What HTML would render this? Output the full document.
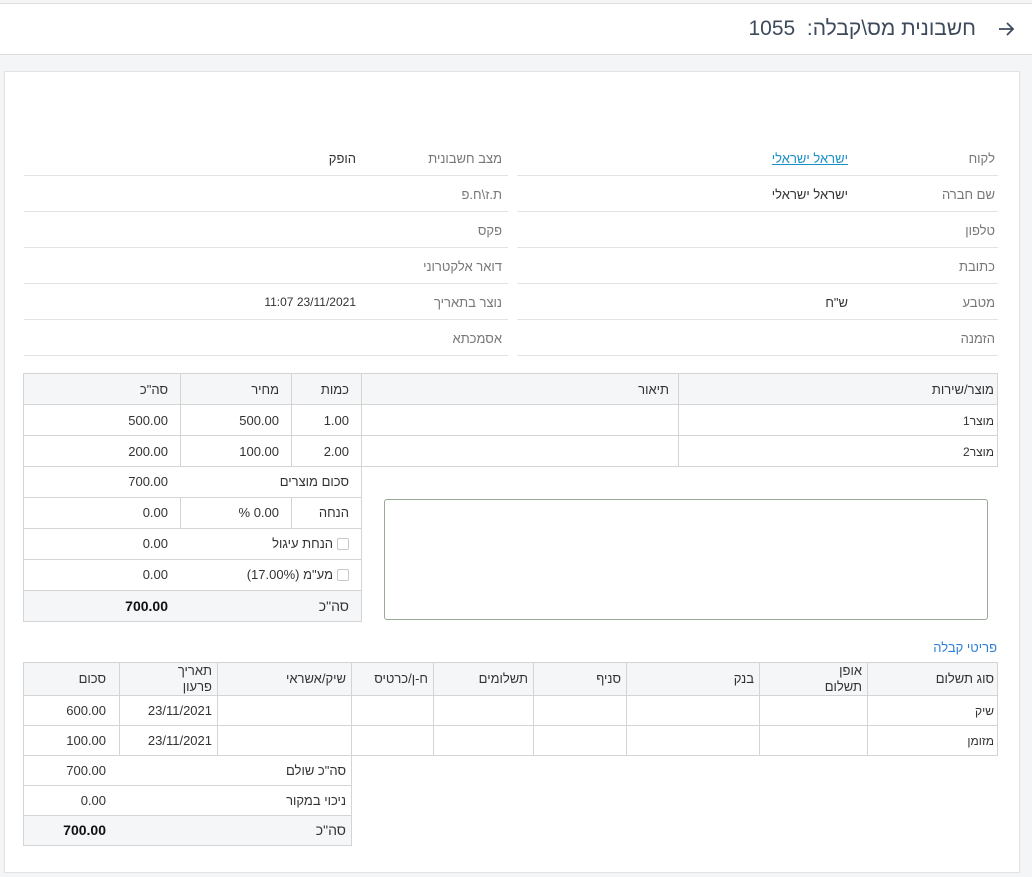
<!DOCTYPE html>
<html lang="he" dir="rtl"><head><meta charset="utf-8">
<style>
*{margin:0;padding:0;box-sizing:border-box}
body{width:1032px;height:877px;background:#f4f5f6;font-family:"Liberation Sans","Noto Sans CJK SC",sans-serif;font-size:13px;color:#333;position:relative;overflow:hidden}
.a{position:absolute}
.t{position:absolute;line-height:16px;white-space:nowrap;direction:rtl}
.l{color:#777}
.hl{position:absolute;height:1px;background:#e3e3e3}
.b{position:absolute;border:1px solid #d4d4d4}
.g{background:#f5f6f8}
.vl{position:absolute;width:1px;background:#d4d4d4}
.bold{font-weight:bold}
.cb{display:inline-block;width:12px;height:12px;border:1px solid #c8c8c8;border-radius:2px;vertical-align:-2px;margin-left:4px;background:#fff}
</style></head><body>
<div class="a" style="left:0;top:0;width:1032px;height:54px;background:#fff;border-top:1px solid #ddd;border-bottom:1px solid #ddd;top:3px;height:52px"></div>
<div class="t" style="right:56px;top:18px;font-size:21px;line-height:22px;color:#3d4a5c">חשבונית מס\קבלה:&nbsp; 1055</div>
<svg class="a" style="left:997px;top:21px" width="18" height="16" viewBox="0 0 18 16"><path d="M2 8H16M10 2L16 8L10 14" fill="none" stroke="#3d4a5c" stroke-width="1.8"/></svg>
<div class="a" style="left:4px;top:71px;width:1016px;height:802px;background:#fff;border:1px solid #e2e2e2"></div>

<!-- info rows -->
<div class="t l" style="right:37px;top:151px">לקוח</div>
<div class="t" style="right:184px;top:151px;color:#1a8fc9;text-decoration:underline">ישראל ישראלי</div>
<div class="t l" style="right:37px;top:187px">שם חברה</div>
<div class="t" style="right:184px;top:187px">ישראל ישראלי</div>
<div class="t l" style="right:37px;top:223px">טלפון</div>
<div class="t l" style="right:37px;top:259px">כתובת</div>
<div class="t l" style="right:37px;top:295px">מטבע</div>
<div class="t" style="right:184px;top:295px">ש"ח</div>
<div class="t l" style="right:37px;top:331px">הזמנה</div>
<div class="t l" style="right:530px;top:151px">מצב חשבונית</div>
<div class="t" style="right:676px;top:151px">הופק</div>
<div class="t l" style="right:530px;top:187px">ת.ז\ח.פ</div>
<div class="t l" style="right:530px;top:223px">פקס</div>
<div class="t l" style="right:530px;top:259px">דואר אלקטרוני</div>
<div class="t l" style="right:530px;top:295px">נוצר בתאריך</div>
<div class="t" style="right:676px;top:294px;font-size:12px">23/11/2021 11:07</div>
<div class="t l" style="right:530px;top:331px">אסמכתא</div>
<div class="hl" style="left:517px;width:481px;top:175px"></div>
<div class="hl" style="left:517px;width:481px;top:211px"></div>
<div class="hl" style="left:517px;width:481px;top:247px"></div>
<div class="hl" style="left:517px;width:481px;top:283px"></div>
<div class="hl" style="left:517px;width:481px;top:319px"></div>
<div class="hl" style="left:517px;width:481px;top:355px"></div>
<div class="hl" style="left:24px;width:484px;top:175px"></div>
<div class="hl" style="left:24px;width:484px;top:211px"></div>
<div class="hl" style="left:24px;width:484px;top:247px"></div>
<div class="hl" style="left:24px;width:484px;top:283px"></div>
<div class="hl" style="left:24px;width:484px;top:319px"></div>
<div class="hl" style="left:24px;width:484px;top:355px"></div>

<!-- products table -->
<div class="b g" style="left:23px;top:373px;width:975px;height:32px"></div>
<div class="b" style="left:23px;top:404px;width:975px;height:32px"></div>
<div class="b" style="left:23px;top:435px;width:975px;height:32px"></div>
<div class="vl" style="left:180px;top:374px;height:92px"></div>
<div class="vl" style="left:291px;top:374px;height:92px"></div>
<div class="vl" style="left:361px;top:374px;height:92px"></div>
<div class="vl" style="left:678px;top:374px;height:92px"></div>
<div class="t" style="right:38px;top:382px">מוצר/שירות</div>
<div class="t" style="right:363px;top:382px">תיאור</div>
<div class="t" style="right:683px;top:382px">כמות</div>
<div class="t" style="right:753px;top:382px">מחיר</div>
<div class="t" style="right:864px;top:382px">סה"כ</div>
<div class="t" style="right:38px;top:413px;font-size:12px">מוצר1</div>
<div class="t" style="right:683px;top:413px">1.00</div>
<div class="t" style="right:753px;top:413px">500.00</div>
<div class="t" style="right:864px;top:413px">500.00</div>
<div class="t" style="right:38px;top:444px;font-size:12px">מוצר2</div>
<div class="t" style="right:683px;top:444px">2.00</div>
<div class="t" style="right:753px;top:444px">100.00</div>
<div class="t" style="right:864px;top:444px">200.00</div>
<!-- summary -->
<div class="a" style="left:23px;top:466px;width:339px;height:156px;border:1px solid #d4d4d4;border-top:none"></div>
<div class="hl" style="left:24px;width:337px;top:497px;background:#d4d4d4"></div>
<div class="hl" style="left:24px;width:337px;top:528px;background:#d4d4d4"></div>
<div class="hl" style="left:24px;width:337px;top:559px;background:#d4d4d4"></div>
<div class="hl" style="left:24px;width:337px;top:590px;background:#d4d4d4"></div>
<div class="a g" style="left:24px;top:591px;width:337px;height:30px"></div>
<div class="vl" style="left:180px;top:497px;height:31px"></div>
<div class="vl" style="left:291px;top:497px;height:31px"></div>
<div class="t" style="right:683px;top:474px">סכום מוצרים</div>
<div class="t" style="right:864px;top:474px">700.00</div>
<div class="t" style="right:683px;top:505px">הנחה</div>
<div class="t" style="right:753px;top:505px">0.00 %</div>
<div class="t" style="right:864px;top:505px">0.00</div>
<div class="t" style="right:683px;top:536px"><span class="cb"></span>הנחת עיגול</div>
<div class="t" style="right:864px;top:536px">0.00</div>
<div class="t" style="right:683px;top:567px"><span class="cb"></span>מע"מ (17.00%)</div>
<div class="t" style="right:864px;top:567px">0.00</div>
<div class="t" style="right:683px;top:598px;font-size:14px">סה"כ</div>
<div class="t bold" style="right:864px;top:598px;font-size:14px;color:#111">700.00</div>
<div class="a" style="left:384px;top:499px;width:604px;height:121px;border:1px solid #9aa89a;border-radius:3px"></div>

<div class="t" style="right:35px;top:640px;color:#2f7fd6">פריטי קבלה</div>
<!-- payments table -->
<div class="b g" style="left:23px;top:662px;width:975px;height:34px"></div>
<div class="b" style="left:23px;top:695px;width:975px;height:31px"></div>
<div class="b" style="left:23px;top:725px;width:975px;height:31px"></div>
<div class="vl" style="left:119px;top:663px;height:92px"></div>
<div class="vl" style="left:217px;top:663px;height:92px"></div>
<div class="vl" style="left:351px;top:663px;height:92px"></div>
<div class="vl" style="left:433px;top:663px;height:92px"></div>
<div class="vl" style="left:533px;top:663px;height:92px"></div>
<div class="vl" style="left:626px;top:663px;height:92px"></div>
<div class="vl" style="left:759px;top:663px;height:92px"></div>
<div class="vl" style="left:867px;top:663px;height:92px"></div>
<div class="t" style="right:38px;top:671px">סוג תשלום</div>
<div class="t" style="right:170px;top:663px;text-align:right">אופן<br>תשלום</div>
<div class="t" style="right:278px;top:671px">בנק</div>
<div class="t" style="right:411px;top:671px">סניף</div>
<div class="t" style="right:504px;top:671px">תשלומים</div>
<div class="t" style="right:604px;top:671px">ח-ן/כרטיס</div>
<div class="t" style="right:686px;top:671px">שיק/אשראי</div>
<div class="t" style="right:820px;top:663px;text-align:right">תאריך<br>פרעון</div>
<div class="t" style="right:926px;top:671px">סכום</div>
<div class="t" style="right:38px;top:703px;font-size:12px">שיק</div>
<div class="t" style="right:820px;top:703px">23/11/2021</div>
<div class="t" style="right:926px;top:703px">600.00</div>
<div class="t" style="right:38px;top:733px;font-size:12px">מזומן</div>
<div class="t" style="right:820px;top:733px">23/11/2021</div>
<div class="t" style="right:926px;top:733px">100.00</div>
<div class="a" style="left:23px;top:755px;width:329px;height:91px;border:1px solid #d4d4d4;border-top:none"></div>
<div class="hl" style="left:24px;width:327px;top:785px;background:#d4d4d4"></div>
<div class="hl" style="left:24px;width:327px;top:815px;background:#d4d4d4"></div>
<div class="a g" style="left:24px;top:816px;width:327px;height:29px"></div>
<div class="t" style="right:686px;top:763px">סה"כ שולם</div>
<div class="t" style="right:926px;top:763px">700.00</div>
<div class="t" style="right:686px;top:793px">ניכוי במקור</div>
<div class="t" style="right:926px;top:793px">0.00</div>
<div class="t" style="right:686px;top:822px;font-size:14px">סה"כ</div>
<div class="t bold" style="right:926px;top:822px;font-size:14px;color:#111">700.00</div>
</body></html>
